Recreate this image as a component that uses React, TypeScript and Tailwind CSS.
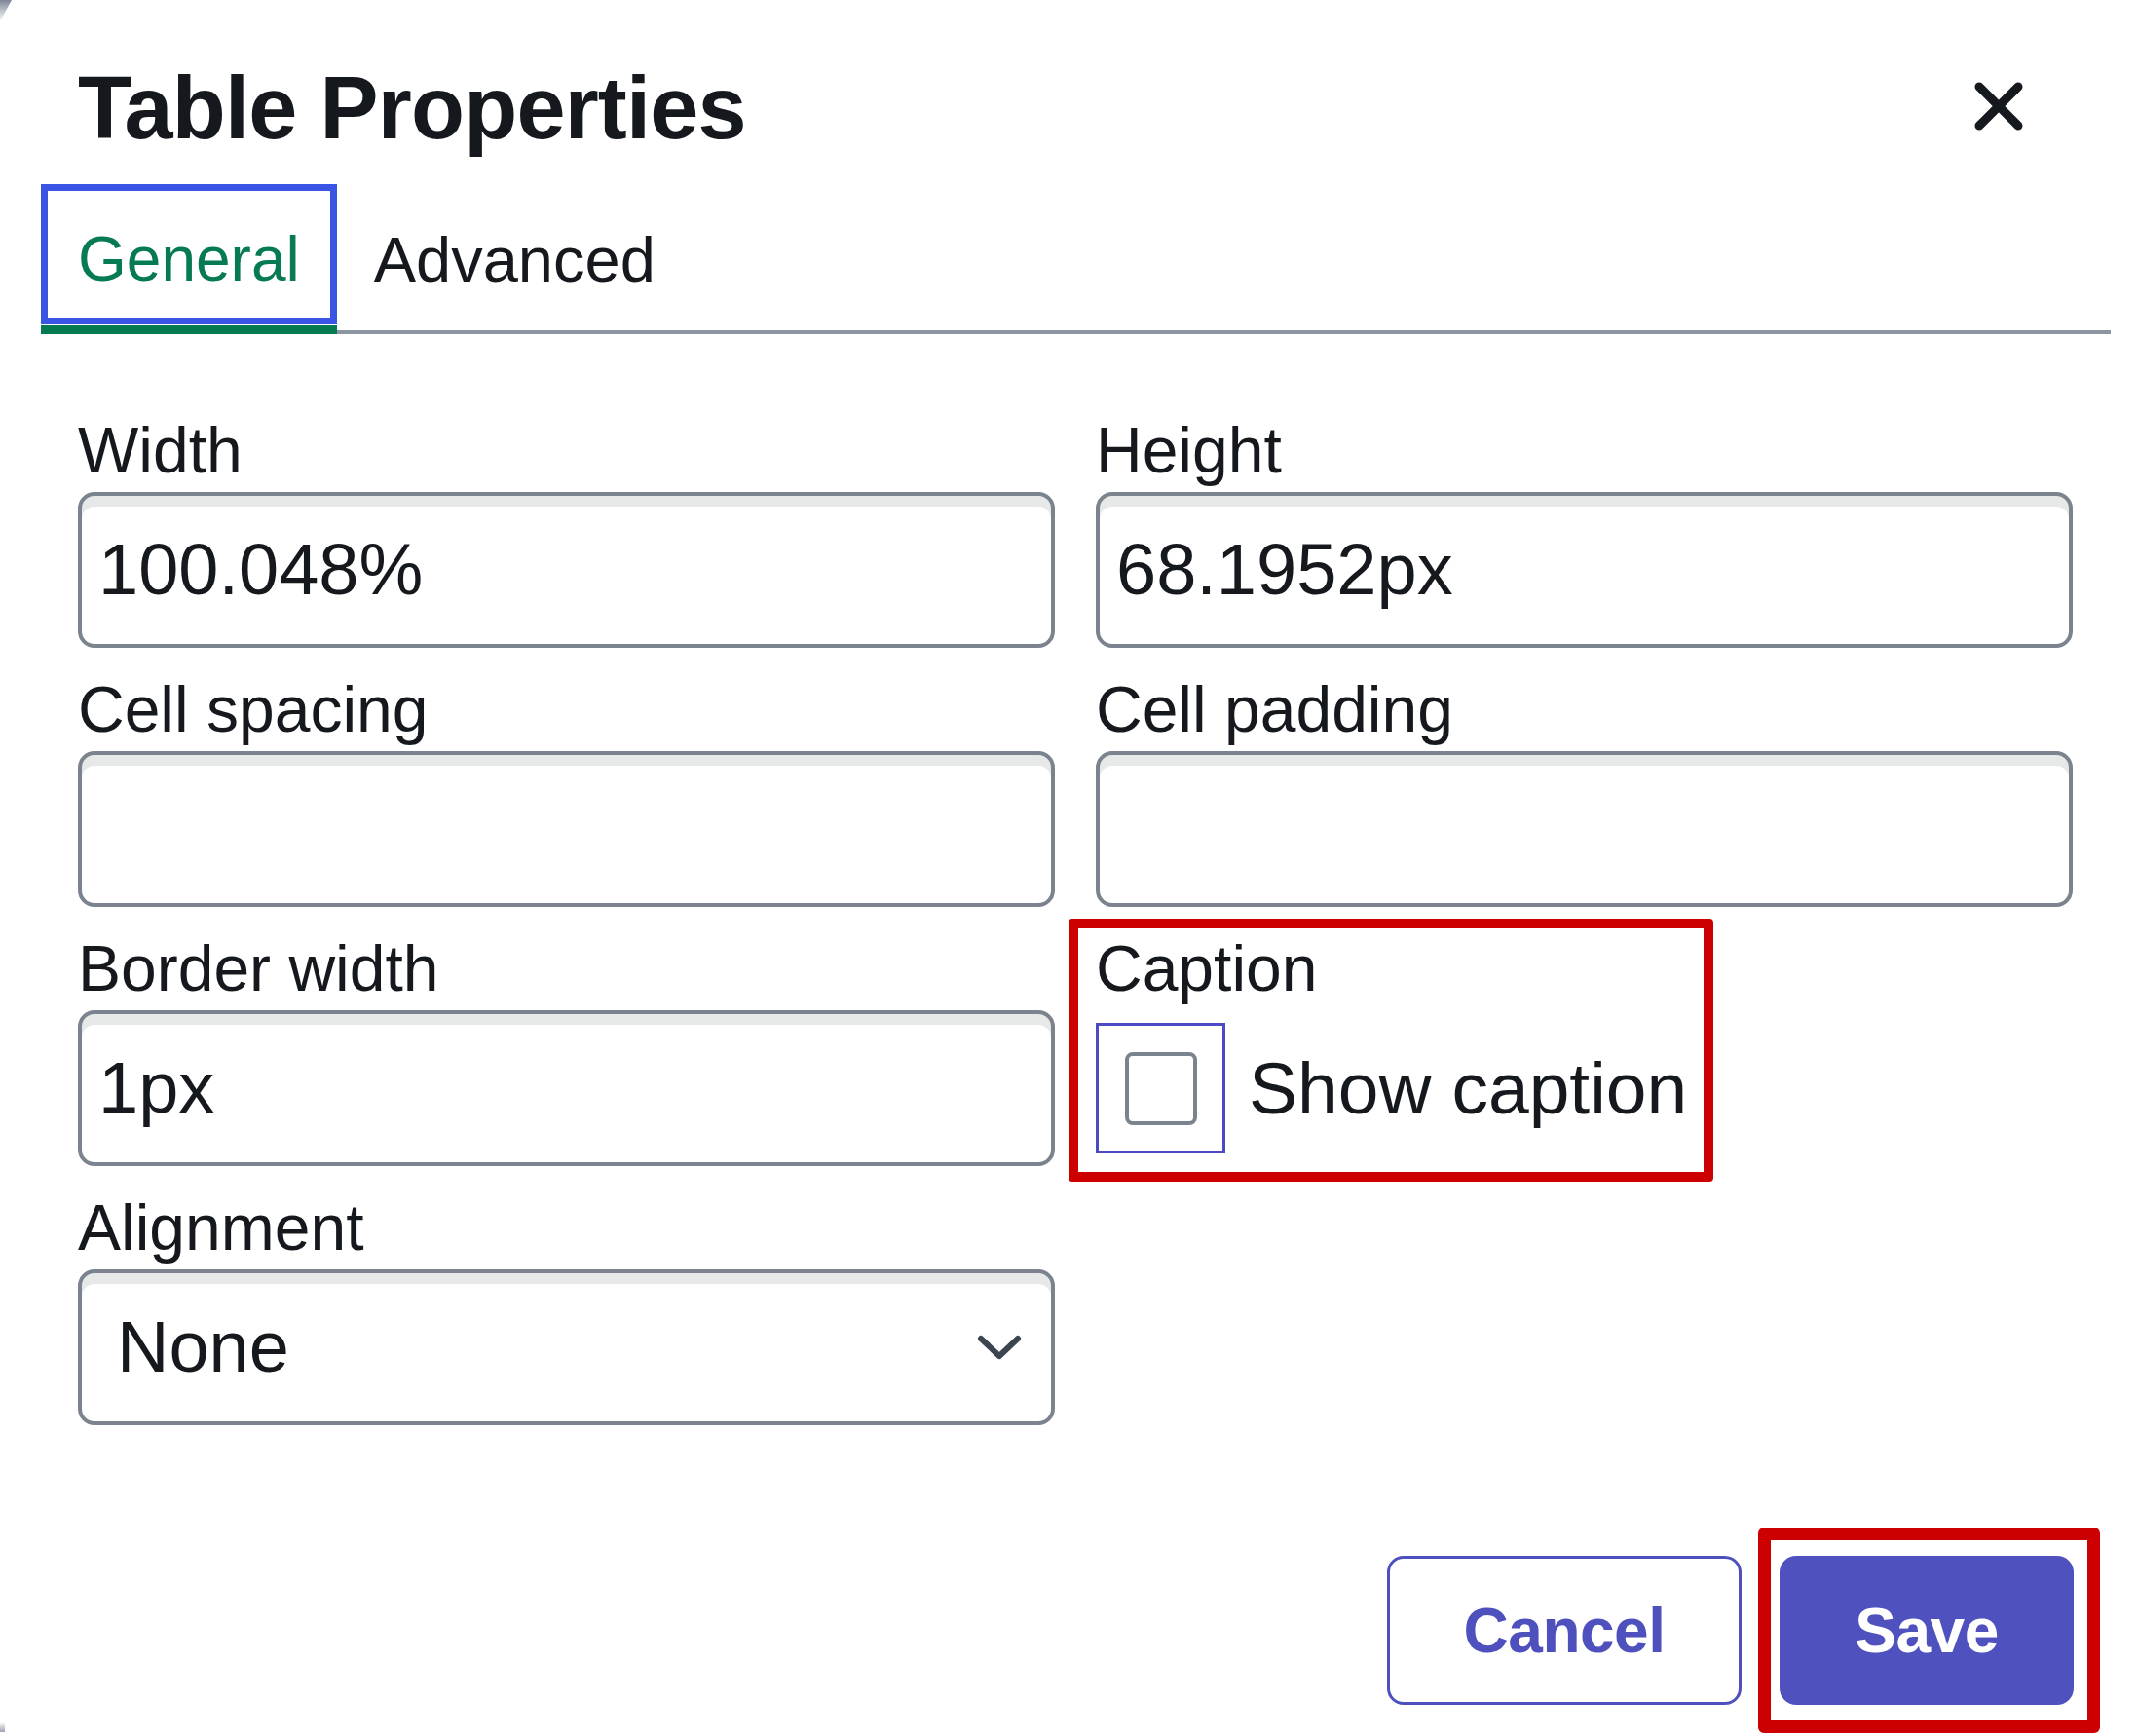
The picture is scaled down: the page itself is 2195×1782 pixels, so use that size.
import React from 'react';

type FieldProps = {
  label: string;
  value?: string;
};

const inputBox =
  'h-[160px] border-[4px] border-[#7b838e] rounded-[17px] bg-white shadow-[inset_0_11px_0_#e7e9e9] flex items-center';

const Field: React.FC<FieldProps> = ({ label, value }) => (
  <div className="flex flex-col">
    <label className="text-[66px] leading-none mb-[10px]">{label}</label>
    <div className={`${inputBox} pl-[17px] text-[74px] leading-none`}>{value}</div>
  </div>
);

const CloseIcon = () => (
  <svg width="50" height="50" viewBox="0 0 50 50" className="mt-[18px]">
    <path d="M5 5 L45 45 M45 5 L5 45" stroke="#15191e" strokeWidth="9" strokeLinecap="round" fill="none" />
  </svg>
);

const Chevron = () => (
  <svg width="46" height="26" viewBox="0 0 46 26">
    <path d="M4 4 L23 22 L42 4" stroke="#3b4550" strokeWidth="6" strokeLinecap="round" strokeLinejoin="round" fill="none" />
  </svg>
);

const App: React.FC = () => {
  return (
    <div className="relative w-[2195px] h-[1782px] overflow-hidden bg-white font-['Liberation_Sans',Arial,sans-serif] text-[#15191e]">
      {/* window corner residue */}
      <div className="absolute left-0 top-0 w-[12px] h-[22px] bg-gradient-to-b from-[#7f8598] to-transparent [clip-path:polygon(0_0,100%_0,0_100%)]" />
      <div className="absolute left-0 bottom-[4px] w-[5px] h-[10px] bg-gradient-to-t from-[#9aa0ad] to-transparent" />

      {/* header */}
      <div className="flex items-start justify-between pl-[80px] pr-[118px] pt-[66px]">
        <h1 className="text-[90px] leading-none font-bold tracking-[-0.8px]">Table Properties</h1>
        <CloseIcon />
      </div>

      {/* tabs */}
      <div className="mt-[33px] ml-[42px] mr-[28px] flex border-b-[4px] border-[#8c95a0]">
        <div className="-mb-[4px] border-b-[9px] border-[#067a50]">
          <div className="border-[7px] border-[#3a55e6] px-[31px] pt-[38px] pb-[28px] text-[64px] leading-none text-[#067a52]">
            General
          </div>
        </div>
        <div className="-mb-[4px] border-b-[9px] border-transparent">
          <div className="border-[7px] border-transparent px-[31px] pt-[38px] pb-[28px] text-[65px] leading-none">
            Advanced
          </div>
        </div>
      </div>

      {/* general form */}
      <div className="mt-[86px] ml-[80px] mr-[67px] grid grid-cols-2 gap-x-[42px] gap-y-[30px]">
        <Field label="Width" value="100.048%" />
        <Field label="Height" value="68.1952px" />
        <Field label="Cell spacing" />
        <Field label="Cell padding" />
        <Field label="Border width" value="1px" />

        <div className="relative flex flex-col">
          <span className="text-[66px] leading-none mb-[10px]">Caption</span>
          <div className="h-[160px] flex items-center">
            <div className="w-[133px] h-[134px] border-[3px] border-[#4b4bc6] flex items-center justify-center">
              <div className="w-[74px] h-[75px] border-[4px] border-[#7b838e] rounded-[8px]" />
            </div>
            <span className="ml-[24px] text-[75px] leading-none">Show caption</span>
          </div>
          <div className="pointer-events-none absolute -left-[28px] -top-[18px] w-[662px] h-[270px] border-[10px] border-[#cc0000] rounded-[4px]" />
        </div>

        <div className="flex flex-col">
          <label className="text-[66px] leading-none mb-[10px]">Alignment</label>
          <div className={`${inputBox} pl-[36px] pr-[30px] justify-between text-[74px] leading-none`}>
            <span>None</span>
            <Chevron />
          </div>
        </div>
      </div>

      {/* footer buttons */}
      <div className="mt-[134px] mr-[66px] flex justify-end gap-[39px]">
        <button className="w-[364px] h-[153px] border-[3px] border-[#4e50bd] rounded-[17px] bg-white text-[64px] leading-none font-bold tracking-[-0.5px] text-[#4e50bd]">
          Cancel
        </button>
        <div className="relative">
          <button className="w-[302px] h-[153px] rounded-[17px] bg-[#4f51be] text-[64px] leading-none font-bold tracking-[-0.5px] text-white">
            Save
          </button>
          <div className="pointer-events-none absolute -left-[22px] -top-[29px] -right-[27px] -bottom-[29px] border-[13px] border-[#cc0000] rounded-[6px]" />
        </div>
      </div>
    </div>
  );
};

export default App;
